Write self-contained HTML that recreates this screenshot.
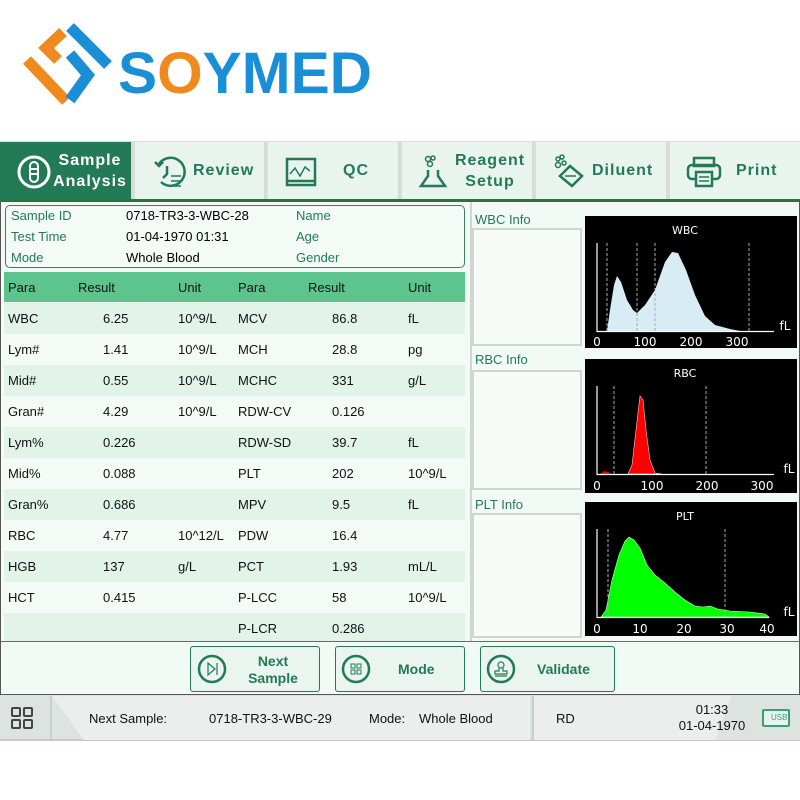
<!DOCTYPE html>
<html><head><meta charset="utf-8"><style>
*{margin:0;padding:0;box-sizing:border-box}
body{width:800px;height:800px;background:#fff;font-family:"Liberation Sans","DejaVu Sans",sans-serif;position:relative;overflow:hidden}
.a{position:absolute}
.tab{position:absolute;top:142px;height:57px;background:#e9f4ef;border-right:2px solid #d5dcd8;color:#237a57;font-weight:bold;font-size:16px;letter-spacing:1px;display:flex;align-items:center}
.tab svg{position:absolute;left:16px;top:12px}
.tab .t{position:absolute;text-align:center;line-height:21px}
.row{position:absolute;left:4px;width:461px;height:31px;font-size:13px;color:#111}
.row span{position:absolute;top:8px}
.btn{position:absolute;top:646px;height:46px;border:1.5px solid #237a57;border-radius:3px;background:#eaf5ef;color:#237a57;font-weight:bold;font-size:14px}
</style></head><body>
<!-- logo -->
<svg class="a" style="left:0;top:0" width="400" height="130">
<g fill="none" stroke="#f08a1e" stroke-width="11" stroke-linecap="butt" stroke-linejoin="miter"><polyline points="63,32 46,48 58,60"/><line x1="27" y1="60" x2="66" y2="101"/></g>
<g fill="none" stroke="#1a8fd8" stroke-width="11" stroke-linejoin="miter"><line x1="70" y1="27" x2="108" y2="65"/><polyline points="70,54 88,75 70,100"/></g>
<text x="118" y="93" font-size="58" font-weight="bold" fill="#1a8fd8" textLength="254" lengthAdjust="spacingAndGlyphs">S<tspan fill="#f08a1e">O</tspan>YMED</text>
</svg>
<!-- tabs -->
<div class="a" style="left:0;top:141px;width:800px;height:60px;background:#d9dedb"></div>
<div class="tab" style="left:0;width:133px;background:#237a57;color:#fff">
<svg width="36" height="36" viewBox="0 0 36 36"><circle cx="18" cy="18" r="15" fill="none" stroke="#fff" stroke-width="3"/><rect x="14" y="8" width="8" height="20" rx="4" fill="none" stroke="#fff" stroke-width="2"/><line x1="14" y1="15" x2="22" y2="15" stroke="#fff" stroke-width="2"/><line x1="14" y1="20" x2="22" y2="20" stroke="#fff" stroke-width="2"/></svg>
<div class="t" style="left:50px;top:8px;width:80px">Sample<br>Analysis</div></div>
<div class="tab" style="left:135px;width:131px">
<svg width="36" height="36" viewBox="0 0 36 36" fill="none" stroke="#237a57" stroke-width="2.5"><path d="M8 10 A14 14 0 1 1 10 28"/><path d="M4 8 L8 12 L12 8"/><path d="M16 12 V20 L12 24"/><path d="M20 22h10M20 27h10M20 32h10" stroke-width="1.5"/></svg>
<div class="t" style="left:58px;top:18px">Review</div></div>
<div class="tab" style="left:268px;width:132px">
<svg width="36" height="36" viewBox="0 0 36 36" fill="none" stroke="#237a57" stroke-width="2.5"><rect x="3" y="5" width="28" height="26"/><path d="M6 20 L11 14 L16 22 L21 13 L26 17" stroke-width="1.5"/><line x1="3" y1="27" x2="31" y2="27"/></svg>
<div class="t" style="left:75px;top:18px">QC</div></div>
<div class="tab" style="left:402px;width:132px">
<svg width="36" height="36" viewBox="0 0 36 36" fill="none" stroke="#237a57" stroke-width="2.5"><circle cx="10" cy="5" r="2.5" stroke-width="1.5"/><circle cx="15" cy="4" r="2" stroke-width="1.5"/><circle cx="12" cy="10" r="2.5" stroke-width="1.5"/><path d="M10 16 V22 L3 32 H27 L20 22 V16"/></svg>
<div class="t" style="left:52px;top:8px;width:72px">Reagent<br>Setup</div></div>
<div class="tab" style="left:536px;width:132px">
<svg width="36" height="36" viewBox="0 0 36 36" fill="none" stroke="#237a57" stroke-width="2.5"><circle cx="6" cy="5" r="2" stroke-width="1.5"/><circle cx="10" cy="3" r="2" stroke-width="1.5"/><circle cx="6" cy="11" r="2.5" stroke-width="1.5"/><circle cx="12" cy="9" r="2" stroke-width="1.5"/><path d="M18 12 L30 22 L20 32 L8 22 Z"/><path d="M13 22 L24 22" stroke-width="1.5"/></svg>
<div class="t" style="left:56px;top:18px">Diluent</div></div>
<div class="tab" style="left:670px;width:130px;border-right:none">
<svg width="36" height="36" viewBox="0 0 36 36" fill="none" stroke="#237a57" stroke-width="2.5"><rect x="8" y="4" width="20" height="8"/><rect x="2" y="11" width="32" height="14" rx="4"/><rect x="10" y="18" width="16" height="14" fill="#e9f4ef"/><path d="M13 23h10M13 27h10" stroke-width="1.5"/></svg>
<div class="t" style="left:66px;top:18px">Print</div></div>
<div class="a" style="left:0;top:199px;width:800px;height:3px;background:#1f7a3c"></div>
<!-- main -->
<div class="a" style="left:0;top:202px;width:800px;height:440px;background:#f2faf6;border-left:1px solid #555;border-right:1px solid #555"></div>
<div class="a" style="left:5px;top:205px;width:460px;height:63px;border:1px solid #3f7d60;border-radius:5px;background:#f4fbf7;font-size:13px">
<span class="a" style="left:5px;top:2px;color:#237a57">Sample ID</span><span class="a" style="left:120px;top:2px">0718-TR3-3-WBC-28</span><span class="a" style="left:290px;top:2px;color:#237a57">Name</span>
<span class="a" style="left:5px;top:23px;color:#237a57">Test Time</span><span class="a" style="left:120px;top:23px">01-04-1970 01:31</span><span class="a" style="left:290px;top:23px;color:#237a57">Age</span>
<span class="a" style="left:5px;top:44px;color:#237a57">Mode</span><span class="a" style="left:120px;top:44px">Whole Blood</span><span class="a" style="left:290px;top:44px;color:#237a57">Gender</span></div>
<div class="row" style="top:272px;background:#5cc48c;height:30px"><span style="left:4px">Para</span><span style="left:74px">Result</span><span style="left:174px">Unit</span><span style="left:234px">Para</span><span style="left:304px">Result</span><span style="left:404px">Unit</span></div>
<div class="a" style="left:470px;top:202px;width:2px;height:440px;background:#cfd6d2"></div>
<div id="rows"></div>
<script>
var d=[["WBC","6.25","10^9/L","MCV","86.8","fL"],["Lym#","1.41","10^9/L","MCH","28.8","pg"],["Mid#","0.55","10^9/L","MCHC","331","g/L"],["Gran#","4.29","10^9/L","RDW-CV","0.126",""],["Lym%","0.226","","RDW-SD","39.7","fL"],["Mid%","0.088","","PLT","202","10^9/L"],["Gran%","0.686","","MPV","9.5","fL"],["RBC","4.77","10^12/L","PDW","16.4",""],["HGB","137","g/L","PCT","1.93","mL/L"],["HCT","0.415","","P-LCC","58","10^9/L"],["","","","P-LCR","0.286",""]];
var h="";d.forEach(function(r,i){h+='<div class="row" style="top:'+(303+i*31)+'px;background:'+(i%2?'#f4fbf7':'#e2f3e9')+'"><span style="left:4px">'+r[0]+'</span><span style="left:99px">'+r[1]+'</span><span style="left:174px">'+r[2]+'</span><span style="left:234px">'+r[3]+'</span><span style="left:328px">'+r[4]+'</span><span style="left:404px">'+r[5]+'</span></div>'});
document.getElementById("rows").innerHTML=h;
</script>
<!-- info boxes -->
<div class="a" style="left:475px;top:212px;font-size:13px;color:#237a57">WBC Info</div>
<div class="a" style="left:472px;top:228px;width:110px;height:118px;border:2px solid #cfd6d2;background:#f6fbf8"></div>
<div class="a" style="left:475px;top:352px;font-size:13px;color:#237a57">RBC Info</div>
<div class="a" style="left:472px;top:370px;width:110px;height:120px;border:2px solid #cfd6d2;background:#f6fbf8"></div>
<div class="a" style="left:475px;top:497px;font-size:13px;color:#237a57">PLT Info</div>
<div class="a" style="left:472px;top:513px;width:110px;height:125px;border:2px solid #cfd6d2;background:#f6fbf8"></div>
<!-- charts -->
<svg class="a" style="left:0;top:0" width="800" height="800" font-family="DejaVu Sans,Liberation Sans,sans-serif">
<rect x="585" y="216" width="212" height="132" fill="#000"/>
<text x="685" y="234" fill="#fff" font-size="11" text-anchor="middle">WBC</text>
<path d="M607 331 L610 310 L614 285 L617 276 L621 282 L627 300 L633 310 L637 313 L645 305 L655 290 L665 262 L672 252 L678 253 L686 270 L695 295 L705 316 L715 325 L730 329 L740 331 Z" fill="#d8ecf6"/>
<g stroke="#aaa" stroke-dasharray="3,2" stroke-width="1"><line x1="607" y1="243" x2="607" y2="331"/><line x1="637" y1="243" x2="637" y2="331"/><line x1="655" y1="243" x2="655" y2="331"/><line x1="749" y1="243" x2="749" y2="331"/></g>
<g stroke="#fff" stroke-width="1.2"><line x1="597" y1="243" x2="597" y2="332"/><line x1="597" y1="331.5" x2="774" y2="331.5"/></g>
<g fill="#fff" font-size="12"><text x="597" y="346" text-anchor="middle">0</text><text x="645" y="346" text-anchor="middle">100</text><text x="691" y="346" text-anchor="middle">200</text><text x="737" y="346" text-anchor="middle">300</text><text x="785" y="330" text-anchor="middle">fL</text></g>
<rect x="585" y="359" width="212" height="134" fill="#000"/>
<text x="685" y="377" fill="#fff" font-size="11" text-anchor="middle">RBC</text>
<path d="M600 474 L604 471 L608 472 L612 474 Z" fill="#e00"/>
<path d="M628 474 L632 465 L636 430 L640 396 L643 400 L646 430 L650 460 L655 473 L662 474 Z" fill="#f00" stroke="#fcc" stroke-width="0.6"/>
<g stroke="#aaa" stroke-dasharray="3,2"><line x1="614" y1="386" x2="614" y2="474"/><line x1="706" y1="386" x2="706" y2="474"/></g>
<g stroke="#fff" stroke-width="1.2"><line x1="597" y1="386" x2="597" y2="475"/><line x1="597" y1="474.5" x2="774" y2="474.5"/></g>
<g fill="#fff" font-size="12"><text x="597" y="490" text-anchor="middle">0</text><text x="652" y="490" text-anchor="middle">100</text><text x="707" y="490" text-anchor="middle">200</text><text x="762" y="490" text-anchor="middle">300</text><text x="789" y="473" text-anchor="middle">fL</text></g>
<rect x="585" y="502" width="212" height="134" fill="#000"/>
<text x="685" y="520" fill="#fff" font-size="11" text-anchor="middle">PLT</text>
<path d="M601 617 L606 610 L612 580 L619 555 L625 541 L629 537 L634 540 L640 548 L647 565 L655 575 L665 583 L675 592 L685 600 L695 606 L703 607 L710 606 L718 609 L730 611 L750 612 L765 614 L769 617 Z" fill="#0f0" stroke="#cfc" stroke-width="0.6"/>
<g stroke="#aaa" stroke-dasharray="3,2"><line x1="608" y1="529" x2="608" y2="617"/><line x1="725" y1="529" x2="725" y2="617"/></g>
<g stroke="#fff" stroke-width="1.2"><line x1="597" y1="529" x2="597" y2="618"/><line x1="597" y1="617.5" x2="769" y2="617.5"/></g>
<g fill="#fff" font-size="12"><text x="597" y="633" text-anchor="middle">0</text><text x="640" y="633" text-anchor="middle">10</text><text x="684" y="633" text-anchor="middle">20</text><text x="727" y="633" text-anchor="middle">30</text><text x="767" y="633" text-anchor="middle">40</text><text x="789" y="616" text-anchor="middle">fL</text></g>
</svg>
<!-- button bar -->
<div class="a" style="left:0;top:641px;width:800px;height:54px;background:#f2faf6;border:1px solid #555;border-top:1px solid #3f7d60"></div>
<div class="btn" style="left:190px;width:130px"><svg class="a" style="left:6px;top:7px" width="30" height="30"><circle cx="15" cy="15" r="13" fill="none" stroke="#237a57" stroke-width="2.5"/><path d="M11 9 L18 15 L11 21 Z M20 9 V21" fill="none" stroke="#237a57" stroke-width="1.2"/></svg><div class="a" style="left:52px;top:6px;width:60px;text-align:center;line-height:17px">Next<br>Sample</div></div>
<div class="btn" style="left:335px;width:130px"><svg class="a" style="left:5px;top:7px" width="30" height="30"><circle cx="15" cy="15" r="13" fill="none" stroke="#237a57" stroke-width="2.5"/><g fill="none" stroke="#237a57" stroke-width="1"><rect x="10" y="10" width="4" height="4"/><rect x="16" y="10" width="4" height="4"/><rect x="10" y="16" width="4" height="4"/><rect x="16" y="16" width="4" height="4"/></g></svg><div class="a" style="left:62px;top:14px">Mode</div></div>
<div class="btn" style="left:480px;width:135px"><svg class="a" style="left:5px;top:7px" width="30" height="30"><circle cx="15" cy="15" r="13" fill="none" stroke="#237a57" stroke-width="2.5"/><g fill="none" stroke="#237a57" stroke-width="1.2"><circle cx="15" cy="11" r="3"/><path d="M13 14 V17 H9 V20 H21 V17 H17 V14 M9 22 H21"/></g></svg><div class="a" style="left:56px;top:14px">Validate</div></div>
<!-- status bar -->
<div class="a" style="left:0;top:695px;width:800px;height:46px;background:#dde3e0;border-bottom:2px solid #c5ccc8"></div>
<svg class="a" style="left:10px;top:706px" width="24" height="24" fill="none" stroke="#444" stroke-width="2"><rect x="2" y="2" width="8" height="8" rx="1"/><rect x="14" y="2" width="8" height="8" rx="1"/><rect x="2" y="14" width="8" height="8" rx="1"/><rect x="14" y="14" width="8" height="8" rx="1"/></svg>
<div class="a" style="left:50px;top:696px;width:2px;height:44px;background:#c8cfcb"></div>
<div class="a" style="left:52px;top:696px;width:478px;height:44px;background:#ebeeec;clip-path:polygon(0 0,100% 0,100% 100%,32px 100%)"></div>
<div class="a" style="left:532px;top:696px;width:2px;height:44px;background:#c8cfcb"></div>
<div class="a" style="left:534px;top:696px;width:266px;height:44px;background:linear-gradient(110deg,#ebeeec 70%,#dde3e0 70%)"></div>
<div class="a" style="left:89px;top:711px;font-size:13px;color:#111">Next Sample:</div>
<div class="a" style="left:209px;top:711px;font-size:13px;color:#111">0718-TR3-3-WBC-29</div>
<div class="a" style="left:369px;top:711px;font-size:13px;color:#111">Mode:</div>
<div class="a" style="left:419px;top:711px;font-size:13px;color:#111">Whole Blood</div>
<div class="a" style="left:556px;top:711px;font-size:13px;color:#111">RD</div>
<div class="a" style="left:672px;top:702px;width:80px;font-size:13px;color:#111;text-align:center;line-height:16px">01:33<br>01-04-1970</div>
<div class="a" style="left:762px;top:709px;width:28px;height:18px;border:2px solid #3aa079;border-radius:2px;font-size:8px;color:#3aa079;line-height:14px;padding-left:7px;background:#e7f4ee">USB</div>
</body></html>
